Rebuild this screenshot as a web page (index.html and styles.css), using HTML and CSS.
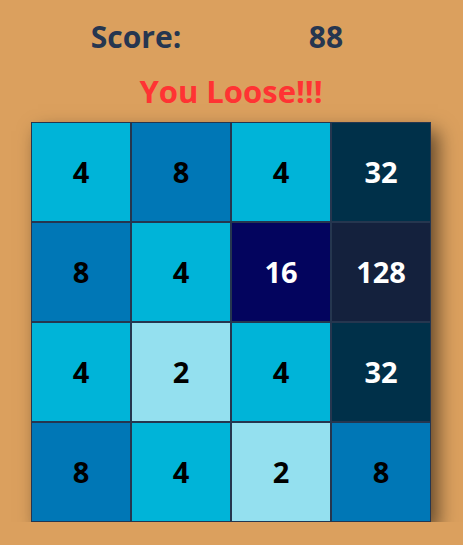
FILE: index.html
```html
<!DOCTYPE html>
<html>
<head>
<meta charset="utf-8">
<link rel="stylesheet" href="styles.css">
</head>
<body>
<div class="game">
  <div class="score-row">
    <div class="score-label">Score:</div>
    <div class="score-value">88</div>
  </div>
  <div class="status">You Loose!!!</div>
  <div class="board">
    <div class="tile t4">4</div>
    <div class="tile t8">8</div>
    <div class="tile t4">4</div>
    <div class="tile t32">32</div>
    <div class="tile t8">8</div>
    <div class="tile t4">4</div>
    <div class="tile t16">16</div>
    <div class="tile t128">128</div>
    <div class="tile t4">4</div>
    <div class="tile t2">2</div>
    <div class="tile t4">4</div>
    <div class="tile t32">32</div>
    <div class="tile t8">8</div>
    <div class="tile t4">4</div>
    <div class="tile t2">2</div>
    <div class="tile t8">8</div>
  </div>
</div>
</body>
</html>
```
FILE: styles.css
```css
html, body {
  margin: 0;
  padding: 0;
  background: #dba05e;
  font-family: "Open Sans", "DejaVu Sans", sans-serif;
}
.game {
  width: 400px;
  margin: 0 0 0 31px;
  padding-top: 16px;
}
.score-row {
  display: grid;
  grid-template-columns: 200px 200px;
  font-size: 30px;
  font-weight: 700;
  color: #263650;
  line-height: 42px;
}
.score-label { text-align: center; padding-left: 10px; }
.score-value { text-align: center; padding-right: 10px; }
.status {
  text-align: center;
  color: #ff3333;
  font-size: 31px;
  font-weight: 700;
  line-height: 42px;
  margin-top: 12px;
}
.board {
  margin-top: 10px;
  display: grid;
  grid-template-columns: repeat(4, 100px);
  grid-auto-rows: 100px;
  box-shadow: 7px 9px 18px rgba(0,0,0,0.55);
}
.tile {
  box-sizing: border-box;
  border: 1px solid #25364f;
  display: flex;
  align-items: center;
  justify-content: center;
  padding-bottom: 2px;
  font-size: 29px;
  font-weight: 700;
  color: #000;
}
.t2 { background: #94e0ef; }
.t4 { background: #00b4d8; }
.t8 { background: #0077b6; }
.t16 { background: #03045e; color: #fff; }
.t32 { background: #003049; color: #fff; }
.t128 { background: #14213d; color: #fff; }
```
